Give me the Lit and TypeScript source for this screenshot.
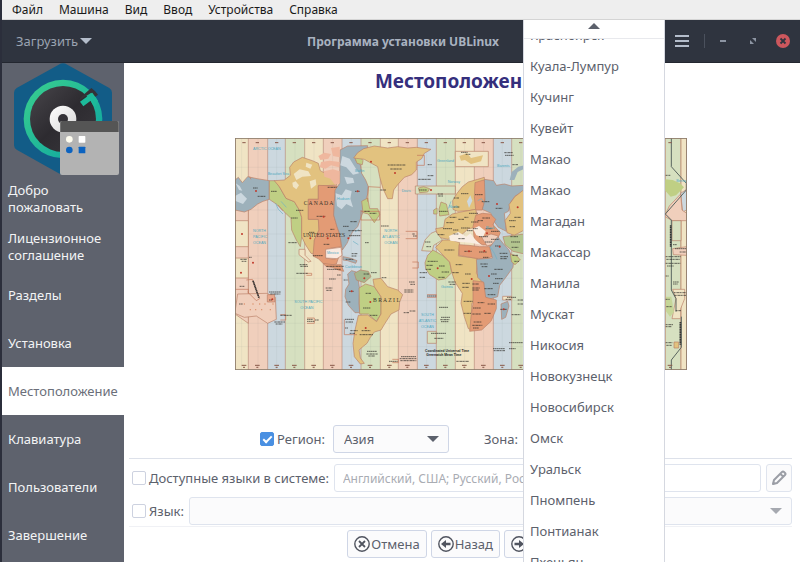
import { LitElement, html, css, svg } from "lit";
import { customElement, state } from "lit/decorators.js";

const SAND = "#e2c27f";
const ORANGE = "#e39b75";
const BLUE = "#9db1bb";
const GREEN = "#bfcf84";
const CREAM = "#f0e4c4";
const PINK = "#f0cfbc";
const PALE_BLUE = "#ccd8df";
const PALE_GREEN = "#d6e0c0";

// Left edge and colour of every hour band.
const bands: [number, string][] = [
  [12, CREAM], [52, PINK], [110, PALE_BLUE], [163, PALE_GREEN], [221, CREAM], [277, PINK],
  [333, PALE_BLUE], [390, PALE_GREEN], [448, CREAM], [502, PINK], [559, PALE_BLUE], [616, PALE_GREEN],
  [673, CREAM], [730, PINK], [787, PALE_BLUE], [842, PALE_GREEN], [898, CREAM], [954, PINK],
  [1010, PALE_BLUE], [1066, PALE_GREEN], [1122, CREAM], [1178, PINK], [1234, PALE_BLUE], [1290, PALE_GREEN],
  [1350, CREAM],
];

const america: [string, string][] = [
  [PINK, "12,240 52,232 52,580 12,552"],
  [CREAM, "12,272 52,272 52,350 12,350"],
  [CREAM, "12,384 52,384 52,444 12,444"],
  [BLUE, "12,150 22,142 34,158 50,140 78,146 115,152 115,208 96,214 80,222 60,238 40,246 12,240"],
  [GREEN, "115,152 132,152 145,170 165,205 190,215 205,240 212,262 212,320 208,350 196,330 182,300 180,265 158,244 140,225 115,208"],
  [SAND, "130,152 160,150 178,136 176,112 188,96 214,82 244,92 262,100 268,122 300,140 318,165 262,168 262,208 232,208 232,268 262,268 264,300 250,330 250,372 240,370 224,345 212,320 212,262 205,240 190,215 165,205 145,170"],
  [ORANGE, "262,166 318,168 322,186 308,215 308,255 318,290 326,312 331,350 300,354 284,362 284,384 308,388 322,384 316,402 295,406 276,400 262,386 246,378 250,330 264,300 262,268 232,268 232,208 262,208"],
  ["#faeae0", "284,358 330,352 333,376 318,386 284,384"],
  [BLUE, "327,60 350,48 410,47 408,64 384,74 374,92 388,104 392,130 404,150 412,170 410,192 404,215 398,240 380,290 365,305 356,322 348,340 334,360 326,312 318,290 308,255 312,180 326,160"],
  [GREEN, "392,214 410,204 416,236 440,236 446,254 430,278 412,252 396,248"],
  [GREEN, "372,84 386,78 396,92 394,104 378,100"],
  [BLUE, "336,380 356,384 378,392 374,400 350,392 336,390"],
  [ORANGE, "276,400 306,404 330,404 338,424 322,420 304,412 286,410"],
  [CREAM, "204,358 222,358 222,376 240,394 232,396 204,374"],
  [BLUE, "350,432 362,422 376,426 382,452 386,478 384,520 386,548 372,548 352,526 342,500 344,478 354,462"],
  ["#a5b78c", "370,430 388,420 412,424 420,440 400,458 376,450"],
  [GREEN, "384,474 404,462 430,470 450,500 450,552 436,574 412,552 386,552"],
  [SAND, "426,448 450,445 470,470 500,480 515,494 506,516 504,540 480,552 462,580 450,600 430,606 418,622 408,640 398,648 384,660 388,684 400,700 388,702 370,680 366,640 372,600 382,556 410,555 437,575 450,552 450,500 430,470"],
  [PINK, "12,545 20,492 108,490 133,502 136,568 110,580 76,558 40,562 12,550"],
  ["#e8a88c", "109,494 131,494 131,516 109,516"],
  [SAND, "368,84 380,68 398,56 430,48 470,54 500,50 530,54 556,52 600,58 580,70 572,86 556,96 556,120 542,134 520,142 500,164 488,180 484,206 470,206 456,176 446,140 440,110 418,98 400,88"],
];

// Inland water, ice and arctic islands, drawn without a border.
const americaDetail: [string, string][] = [
  [PALE_BLUE, "12,198 30,188 48,206 36,222 12,212"],
  [PALE_BLUE, "14,160 26,168 34,182 24,180"],
  [CREAM, "188,132 206,118 232,124 240,138 214,140 196,150"],
  [CREAM, "236,154 254,148 256,164 240,176"],
  [CREAM, "226,98 244,104 238,116 224,110"],
  [CREAM, "184,158 194,154 204,166 196,178 186,170"],
  ["#efb79e", "262,78 280,68 300,72 292,86 268,90"],
  ["#efb79e", "300,54 326,50 326,82 306,78"],
  ["#efb79e", "270,96 296,92 326,96 324,112 300,106 284,116 266,112"],
  ["#efb79e", "278,124 306,118 326,124 326,160 312,164 298,146 280,140"],
  [PALE_BLUE, "314,190 332,196 344,178 362,184 358,206 366,232 346,222 332,238 318,228"],
  [PALE_BLUE, "334,78 356,86 372,112 384,130 366,134 346,112 328,106"],
  [PALE_BLUE, "340,140 366,144 370,158 348,162"],
];

const oldWorld: [string, string][] = [
  [CREAM, "223,64 322,64 322,110 223,110"],
  [PALE_GREEN, "103,168 223,168 223,192 103,192"],
  [GREEN, "112,174 128,170 146,176 140,186 116,188"],
  [SAND, "215,212 228,190 244,170 262,156 290,148 310,142 312,210 284,238 264,242 230,244 216,238"],
  [ORANGE, "282,158 308,150 320,166 312,206 304,240 284,240 280,200"],
  [BLUE, "310,148 338,152 346,166 370,162 392,168 430,166 430,184 402,198 390,216 382,244 370,250 376,304 352,292 336,270 330,250 304,238 312,210"],
  [GREEN, "174,238 180,216 196,222 204,254 176,258"],
  [GREEN, "158,240 168,234 168,252 158,252"],
  [SAND, "164,296 188,292 192,268 214,252 240,246 284,238 290,262 286,292 262,296 240,316 216,312 202,328 172,322"],
  [ORANGE, "284,256 304,250 328,252 344,268 336,284 358,308 350,326 330,346 304,344 280,330 276,290"],
  [PINK, "302,322 330,312 352,318 346,340 318,348"],
  [PALE_GREEN, "122,362 132,330 150,310 164,304 184,330 158,346 154,364"],
  [GREEN, "132,398 140,376 156,360 184,376 206,396 212,428 194,446 172,450 146,434 134,416"],
  [SAND, "164,352 186,330 212,330 236,338 232,378 290,385 286,430 306,456 300,512 272,520 272,600 262,596 250,560 240,520 244,490 222,456 214,432 206,396"],
  [ORANGE, "234,344 264,346 296,350 336,350 340,376 318,386 285,385 234,376"],
  [BLUE, "286,388 334,384 326,352 350,320 366,340 384,360 398,392 396,412 376,440 356,466 350,500 324,508 308,496 308,460 290,442"],
  [GREEN, "388,372 408,378 418,390 402,404 392,396"],
  [ORANGE, "276,452 308,456 314,502 346,510 346,536 330,574 302,600 266,604 270,560 276,520"],
  [BLUE, "360,522 380,514 384,528 374,562 362,568"],
  [SAND, "372,272 388,250 384,224 402,200 430,178 430,300 400,316 378,308"],
  ["#b3c58f", "366,320 430,312 430,372 396,364 372,344"],
  [PALE_GREEN, "139,604 166,604 166,640 139,640"],
  [CREAM, "365,499 392,499 392,510 365,510"],
];

const oldWorldDetail: [string, string][] = [
  [SAND, "235,78 258,70 270,84 306,76 300,94 270,102 252,90 240,92"],
  [PALE_BLUE, "258,214 268,196 274,212 264,234"],
  [BLUE, "386,150 392,126 412,110 430,106 430,116 410,126 400,150"],
  ["#f9ede2", "204,318 232,306 256,320 268,310 284,330 300,344 268,338 240,336 208,332"],
  ["#f9ede2", "276,296 294,288 314,304 306,322 286,316"],
];

const pacific: [string, string][] = [
  [PALE_GREEN, "28,24 75,24 75,720 28,720"],
  [CREAM, "75,24 92,24 92,720 75,720"],
  [PALE_BLUE, "74,190 92,178 92,240 80,246"],
  [PINK, "28,254 40,228 74,192 78,240 92,250 92,272 48,272 28,260"],
  [PALE_GREEN, "48,272 75,272 75,332 48,332"],
  [PINK, "50,356 92,350 92,376 52,374"],
  [CREAM, "50,478 86,478 86,506 74,536 74,566 48,566 60,506"],
  [SAND, "54,636 68,636 68,654 54,654"],
];

const pacificDetail: [string, string][] = [
  [GREEN, "28,148 50,150 72,160 84,172 60,196 44,200 28,182"],
  ["#c6d698", "30,500 46,500 54,546 42,560 30,544"],
];

// Tiny place captions: x, y, length.
const captions: [number, number, number][] = [
  [66, 174, 14], [80, 199, 24], [120, 184, 18], [195, 241, 22], [180, 264, 20], [257, 259, 26], [290, 172, 28],
  [372, 184, 14], [358, 275, 20], [336, 289, 18], [352, 302, 40], [354, 317, 34], [172, 338, 26], [234, 307, 16],
  [278, 343, 18], [298, 298, 12], [246, 377, 30], [362, 371, 18], [362, 378, 14], [344, 388, 24], [206, 404, 24],
  [208, 409, 24], [196, 430, 34], [286, 409, 52], [288, 418, 42], [294, 447, 20], [284, 474, 20], [286, 481, 16],
  [318, 435, 12], [338, 450, 12], [28, 388, 20], [32, 394, 14], [54, 382, 8], [26, 469, 14], [24, 522, 12],
  [114, 486, 36], [118, 492, 30], [114, 510, 10], [148, 556, 34], [228, 568, 18], [228, 574, 22], [252, 570, 12],
  [130, 576, 32], [134, 582, 20], [354, 484, 14], [344, 516, 14], [396, 534, 22], [416, 556, 24], [404, 490, 16],
  [392, 602, 26], [386, 614, 40], [342, 568, 28], [344, 576, 22], [358, 602, 22], [356, 610, 16], [342, 594, 10],
  [408, 664, 30], [406, 672, 34], [412, 678, 20], [402, 338, 12], [398, 432, 16], [420, 428, 18], [416, 250, 20],
  [450, 288, 24], [400, 244, 16], [470, 105, 54], [478, 117, 34], [590, 104, 12], [590, 137, 18], [562, 148, 38],
  [448, 180, 18], [620, 192, 16], [564, 180, 24], [622, 198, 14], [690, 67, 20], [704, 73, 14], [820, 68, 26],
  [822, 76, 26], [844, 104, 18], [452, 443, 14], [534, 456, 18], [538, 463, 14], [520, 480, 28], [520, 486, 28],
  [518, 548, 16], [536, 543, 18], [544, 312, 8], [546, 318, 12], [566, 428, 22], [566, 442, 16], [588, 498, 28],
  [624, 532, 28], [630, 562, 28], [628, 569, 28], [630, 575, 22], [600, 610, 46], [610, 625, 28], [510, 680, 46],
  [506, 686, 50], [508, 692, 48], [474, 694, 26], [676, 694, 38], [786, 656, 36], [788, 662, 34], [834, 656, 20],
  [834, 638, 44], [860, 510, 24], [860, 522, 20], [828, 502, 28], [842, 554, 26],
  [668, 204, 16], [690, 191, 22], [732, 194, 24], [668, 231, 18], [794, 235, 20], [752, 215, 24], [714, 250, 28],
  [624, 244, 26], [656, 262, 20], [682, 268, 18], [646, 278, 22], [700, 262, 12], [720, 276, 22], [740, 272, 16],
  [754, 264, 24], [636, 296, 28], [666, 300, 16], [690, 294, 26], [708, 302, 18], [726, 296, 14], [620, 314, 20],
  [668, 312, 14], [682, 326, 20], [764, 296, 20], [780, 304, 26], [744, 320, 28], [762, 336, 22], [780, 328, 24],
  [640, 360, 30], [700, 364, 22], [744, 366, 24], [756, 382, 16], [792, 348, 16], [806, 370, 24], [808, 380, 24],
  [808, 386, 20], [590, 394, 30], [586, 406, 20], [584, 418, 16], [624, 408, 18], [632, 426, 22], [674, 404, 20],
  [748, 402, 22], [752, 410, 18], [790, 418, 26], [780, 432, 18], [702, 432, 18], [664, 428, 20], [622, 442, 20],
  [652, 456, 22], [656, 463, 18], [694, 460, 22], [694, 472, 20], [724, 462, 20], [724, 480, 20], [724, 474, 22],
  [760, 476, 26], [792, 446, 24], [786, 460, 18], [770, 494, 24], [698, 514, 28], [740, 518, 20], [770, 522, 22],
  [698, 550, 22], [726, 534, 24], [724, 552, 26], [760, 550, 20], [728, 576, 24], [724, 586, 30], [726, 594, 18],
  [808, 538, 20], [824, 508, 16], [586, 350, 14], [582, 336, 16], [834, 272, 20], [836, 290, 16], [838, 320, 24],
  [840, 336, 28], [842, 352, 20], [844, 376, 18], [850, 394, 14], [850, 262, 20],
  [1304, 136, 14], [1304, 380, 46], [1306, 388, 40], [1304, 400, 44], [1308, 408, 20], [1326, 344, 12], [1332, 356, 34],
  [1346, 366, 20], [1304, 438, 10], [1326, 456, 18], [1326, 462, 14], [1328, 488, 38], [1330, 496, 36], [1304, 508, 12],
  [1306, 530, 16], [1334, 542, 16], [1304, 584, 22], [1304, 590, 18], [1304, 638, 20], [1306, 646, 16],
];

// Capital markers.
const dots: [number, number][] = [
  [75, 183], [33, 312], [238, 325], [290, 325], [352, 325], [278, 260], [380, 184], [400, 445], [362, 484], [418, 516],
  [404, 594], [30, 428], [66, 398], [124, 508], [492, 129], [600, 180], [798, 222], [620, 415], [714, 364], [760, 363],
  [722, 447], [774, 438], [818, 538], [806, 350], [420, 95], [768, 310], [860, 232],
];

// Blue sea names: x, y, text.
const seas: [number, number, string][] = [
  [66, 61, "ARCTIC  OCEAN"], [110, 136, "Beaufort Sea"], [66, 305, "NORTH"], [66, 324, "PACIFIC"], [66, 342, "OCEAN"],
  [190, 519, "SOUTH PACIFIC"], [208, 537, "OCEAN"], [460, 305, "NORTH"], [454, 324, "ATLANTIC"], [460, 342, "OCEAN"],
  [570, 558, "SOUTH"], [563, 577, "ATLANTIC"], [570, 595, "OCEAN"], [342, 415, "Caribbean"], [618, 97, "Greenland"],
  [650, 160, "Norway"], [654, 233, "North"], [512, 186, "Davis"], [798, 112, "Barents"],
  [372, 126, "Baffin"], [318, 210, "Hudson"], [764, 297, "Black"],
  [630, 474, "Guinea"], [288, 372, "Mexico"], [1336, 156, "Bering"],
];

const land = (shapes: [string, string][]) =>
  shapes.map(([fill, points]) => svg`<polygon fill=${fill} points=${points}></polygon>`);

const downArrow = html`<svg class="arrow" viewBox="0 0 12 6" aria-hidden="true"><path d="M0 0h12L6 6z" /></svg>`;

@customElement("timezone-map")
export class TimezoneMap extends LitElement {
  static styles = css`
    :host { display: block; width: 452px; max-width: 100%; }
    .map { display: block; width: 100%; height: auto; font-family: "Liberation Serif", serif; }
    .outline { stroke: #b98068; stroke-width: 2; stroke-linejoin: round; }
    .sea { fill: #4fa9c0; font: 11px "Liberation Sans", sans-serif; }
    .country { fill: #3c352c; font-size: 17px; }
    .note { fill: #222; font: bold 10px "Liberation Sans", sans-serif; }
  `;

  render() {
    return html`
      <svg class="map" viewBox="12 24 1356 696" role="img" aria-label="Карта часовых поясов">
        ${bands.map(([x, fill]) => svg`<rect x=${x} y="24" width="60" height="696" fill=${fill}></rect>`)}
        ${bands.map(([x]) => svg`<path d=${`M${x} 24V720`} stroke="#b98c7c" stroke-width="2"></path>`)}
        <path d="M32 24V720M81 24V720M137 24V720M192 24V720M249 24V720M305 24V720M361 24V720M419 24V720M475 24V720M530 24V720M587 24V720M644 24V720M701 24V720M758 24V720M814 24V720M870 24V720M12 112H1368M12 181H1368M12 240H1368M12 312H1368M12 378H1368M12 445H1368M12 512H1368M12 580H1368M12 650H1368" stroke="#77827d" stroke-opacity=".22" stroke-width="1" />
        <g class="outline">${land(america)}</g>
        <g>${land(americaDetail)}</g>
        <g class="outline" transform="translate(450 0)">${land(oldWorld)}</g>
        <g transform="translate(450 0)">${land(oldWorldDetail)}</g>
        <g class="outline" transform="translate(1275 0)">${land(pacific)}</g>
        <g transform="translate(1275 0)">${land(pacificDetail)}</g>
        <g fill="none" stroke="#c27659" stroke-width="2">
          <path d="M390 240V270H446V244H390M340 568V614H378M148 554H164V570H148M226 430H242V436H226M228 564H250V580H228M524 304H558V326H524M558 76H580V106H558M544 396H562V414H544M588 494H616V502H588M484 688H502V698H484" />
          <path d="M410 215L412 170L448 172M140 225L156 242M60 148L56 140" />
          <path d="M12 478H52V490M46 450L64 448L86 506L76 512L50 486" />
        </g>
        <path d="M1321 24V110L1366 160V180L1303 252L1321 270V480L1335 506V545M1351 560V652L1321 690V720" fill="none" stroke="#5a655f" stroke-width="3" />
        <path d="M66 452L84 504M1319 286V350M1348 576V644" stroke="#333" stroke-width="5" stroke-dasharray="4 1" />
        <path d="M134 220L142 238L156 252M150 214L166 232M366 334L382 344M372 306L384 298M776 348L790 370L798 388M660 214L652 236M740 212L752 206L760 220" fill="none" stroke="#6fb1c4" stroke-width="2" />
        <g stroke="#2e2c28" stroke-width="3" stroke-opacity=".7">
          ${captions.map(([x, y, w]) => svg`<path d=${`M${x} ${y}h${w}`} stroke-dasharray="5 1 3 1 7 1"></path>`)}
        </g>
        <g fill="#c0392b">${dots.map(([x, y]) => svg`<circle cx=${x} cy=${y} r="3"></circle>`)}</g>
        <g fill="#d98a63">
          ${[40, 58, 66, 74, 86, 92, 102, 118, 126].map((x, i) => svg`<circle cx=${x} cy=${522 + ((i * 17) % 34)} r="2"></circle>`)}
        </g>
        <g stroke="#8a5a4a" stroke-width="3">
          ${bands.map(([x]) => svg`<path d=${`M${x + 22} 38h10M${x + 20} 706h14M${x + 24} 712h6`}></path>`)}
        </g>
        ${seas.map(([x, y, name]) => svg`<text class="sea" x=${x} y=${y}>${name}</text>`)}
        <text class="country" x="218" y="226">C A N A D A</text>
        <text class="country" x="216" y="322">UNITED STATES</text>
        <text class="country" x="426" y="517">B R A Z I L</text>
        <text class="note" x="582" y="666">Coordinated Universal Time</text>
        <text class="note" x="586" y="677">Greenwich Mean Time</text>
        <rect x="13" y="25" width="1354" height="694" fill="none" stroke="#8d7d6c" stroke-width="3" />
      </svg>
    `;
  }
}

@customElement("app-root")
export class AppRoot extends LitElement {
  @state() private step = "Местоположение";

  static styles = css`
    :host {
      display: flex; flex-direction: column; position: relative; box-sizing: border-box;
      min-height: 100vh; overflow: hidden; background: #fff; border-left: 2px solid #2b2e3b;
      color: #5c616c; font: 13px/17px "Noto Sans", "Open Sans", sans-serif;
    }
    button, select, input { font: inherit; color: inherit; margin: 0; box-sizing: border-box; }
    svg { display: block; flex: none; }
    .menubar { display: flex; height: 20px; gap: 16px; padding: 0 10px; box-sizing: border-box; background: #eee; border-bottom: 1px solid #d4d4d4; }
    .menubar button { padding: 0; border: 0; background: none; color: #1a1a1a; font-size: 12px; line-height: 18px; }
    .titlebar { display: grid; grid-template-columns: 1fr auto 1fr; align-items: center; height: 43px; box-sizing: border-box; padding: 0 10px 0 14px; background: #2f343f; border-bottom: 1px solid #232730; color: #afb8c6; }
    .titlebar button { display: flex; align-items: center; justify-content: center; padding: 0; border: 0; background: none; }
    .titlebar .load { justify-self: start; gap: 2px; color: #9aa3b1; }
    .load .arrow { fill: #b4bdcb; }
    .title { margin: 0; font-size: 12px; line-height: 17px; font-weight: 700; color: #a9b2c0; }
    .controls { display: flex; align-items: center; justify-self: end; }
    .controls .divider { width: 1px; height: 14px; margin: 0 11px 0 15px; background: #4b515d; }
    .controls button { width: 14px; height: 14px; }
    .controls .win { margin-right: 16px; }
    .arrow { width: 12px; height: 6px; fill: #5c616c; }
    .body { display: flex; flex: 1; }
    .sidebar { flex: none; width: 122px; background: #5e626d; }
    .steps { list-style: none; margin: 0; padding: 0; }
    .step { display: flex; align-items: center; width: 100%; height: 48px; padding: 0 6px; border: 0; background: none; color: #f3f4f5; text-align: left; }
    .step.current { background: #fff; color: #6b6f7a; }
    .content { display: flex; flex: 1; flex-direction: column; min-width: 0; padding: 0 8px 4px 5px; }
    .heading { margin: 0; padding: 4px 0; font-size: 19px; line-height: 28px; font-weight: 700; text-align: center; color: #352f7d; }
    .map-area { display: flex; flex: 1; justify-content: center; align-items: flex-start; padding: 39px 0 16px; }
    .row { display: flex; align-items: center; }
    .place { justify-content: center; padding-bottom: 5px; }
    .settings { display: flex; flex-direction: column; gap: 5px; padding: 5px 0 1px 3px; border-top: 1px solid #dde1ea; border-bottom: 1px solid #f0f1f5; }
    .settings .row { gap: 5px; }
    .check { display: flex; align-items: center; gap: 3px; white-space: nowrap; }
    .check input { display: grid; place-items: center; appearance: none; width: 14px; height: 14px; border: 1px solid #cdd2e0; border-radius: 2px; background: #fff; }
    .check input:checked { border-color: #4a90e2; background: #4a90e2; }
    .check input:checked::after { content: ""; width: 7px; height: 3px; border: solid #fff; border-width: 0 0 2px 2px; transform: translateY(-1px) rotate(-45deg); }
    .combo { display: grid; align-items: center; height: 28px; }
    .combo select, .combo .arrow { grid-area: 1 / 1; }
    .combo select { appearance: none; width: 100%; height: 28px; padding: 0 10px; border: 1px solid #cfd6e6; border-radius: 3px; background: #fbfbfc; }
    .combo .arrow { justify-self: end; margin-right: 10px; pointer-events: none; }
    .combo.region { width: 116px; margin-left: 8px; }
    .combo.zone { width: 138px; margin-left: 5px; }
    .combo.wide { flex: 1; }
    .combo.wide select { border-color: #dfe4ee; }
    .combo.wide .arrow { fill: #a6a9b0; }
    .zone-label { margin-left: 35px; }
    .languages { flex: 1; min-width: 0; height: 28px; padding: 0 8px; border: 1px solid #dfe4ee; border-radius: 3px; background: #fff; font-size: 12px; }
    .languages::placeholder { color: #a9acb3; opacity: 1; }
    .edit { display: grid; place-items: center; width: 26px; height: 28px; padding: 0; border: 1px solid #dfe4ee; border-radius: 3px; background: #fbfbfc; }
    .actions { display: flex; justify-content: center; gap: 4px; padding-top: 3px; }
    .action { display: flex; align-items: center; height: 28px; gap: 1px; padding: 0 6px; border: 1px solid #cfd6e6; border-radius: 3px; background: #fbfbfc; }
    .popup { position: absolute; top: 20px; bottom: 0; left: calc(50% + 122px); width: 142px; box-sizing: border-box; overflow: hidden; background: #fff; border: solid #d5d8e0; border-width: 0 1px; }
    .scroll-up { position: absolute; top: 0; left: 0; right: 0; display: grid; justify-content: center; align-content: start; height: 19px; padding: 3px 0 0; border: 0; border-bottom: 1px solid #e8e9ed; background: #fff; }
    .options { list-style: none; margin: 0; padding: 0; }
    .option { padding: 7px 6px; }
  `;

  private steps = ["Добро пожаловать", "Лицензионное соглашение", "Разделы", "Установка", "Местоположение", "Клавиатура", "Пользователи", "Завершение"];

  private cities = ["Красноярск", "Куала-Лумпур", "Кучинг", "Кувейт", "Макао", "Макао", "Магадан", "Макассар", "Манила", "Мускат", "Никосия", "Новокузнецк", "Новосибирск", "Омск", "Уральск", "Пномпень", "Понтианак", "Пхеньян"];

  private logo() {
    return html`
      <svg width="122" height="112" viewBox="6 9 366 336" role="img" aria-label="UBLinux">
        <defs>
          <linearGradient id="ring" x1="0" y1="0" x2="1" y2="1"><stop offset="0" stop-color="#3bd08d" /><stop offset="1" stop-color="#0aa3a3" /></linearGradient>
          <linearGradient id="disc" x1="0" y1="0" x2="1" y2="1"><stop offset="0" stop-color="#48464b" /><stop offset=".5" stop-color="#2d2b30" /><stop offset="1" stop-color="#3b393e" /></linearGradient>
          <linearGradient id="hub" x1="0" y1="0" x2="1" y2="1"><stop offset="0" stop-color="#fff" /><stop offset="1" stop-color="#d5d5d5" /></linearGradient>
        </defs>
        <path d="M176 14Q189 6 202 14L328 84Q336 89 336 98V256Q336 264 328 269L202 340Q189 348 176 340L50 269Q42 264 42 256V98Q42 89 50 84Z" fill="#125c87" />
        <circle cx="189" cy="177" r="118" fill="url(#ring)" />
        <circle cx="189" cy="177" r="99" fill="url(#disc)" />
        <path d="M236 122L246 108L274 84Q288 94 294 104L284 112L274 98Z" fill="#343237" />
        <path d="M240 125L277 98L294 122L284 144L272 122L250 139Z" fill="#1dbb9b" />
        <circle cx="189" cy="177" r="40" fill="url(#hub)" />
        <circle cx="189" cy="177" r="15" fill="#343237" />
        <rect x="180" y="183" width="177" height="162" rx="6" fill="#b3b3b3" />
        <path d="M181 216V189Q181 183 187 183H350Q356 183 356 189V216Z" fill="#555" />
        <circle cx="208" cy="238" r="10" fill="#fffdf0" />
        <rect x="236" y="228" width="20" height="20" rx="2" fill="#fff" />
        <circle cx="208" cy="270" r="10" fill="#0c63c0" />
        <rect x="236" y="260" width="20" height="20" rx="2" fill="#0c63c0" />
      </svg>
    `;
  }

  private ringIcon(glyph: unknown) {
    return html`<svg width="16" height="16" viewBox="0 0 16 16" fill="none" stroke="#50545f" aria-hidden="true">
      <circle cx="8" cy="8" r="7.2" stroke-width="1.4" />${glyph}
    </svg>`;
  }

  render() {
    return html`
      <nav class="menubar" aria-label="Меню">
        ${["Файл", "Машина", "Вид", "Ввод", "Устройства", "Справка"].map((m) => html`<button type="button">${m}</button>`)}
      </nav>
      <header class="titlebar">
        <button class="load" type="button">Загрузить ${downArrow}</button>
        <h1 class="title">Программа установки UBLinux</h1>
        <div class="controls">
          <button type="button" aria-label="Меню приложения">
            <svg width="14" height="12" viewBox="0 0 14 12"><path d="M0 0h14v2H0zM0 5h14v2H0zM0 10h14v2H0z" fill="#b4bdcb" /></svg>
          </button>
          <span class="divider"></span>
          <button class="win" type="button" aria-label="Свернуть">
            <svg width="14" height="14" viewBox="0 0 14 14"><path d="M4 6h6v2H4z" fill="#8d95a3" /></svg>
          </button>
          <button class="win" type="button" aria-label="Развернуть">
            <svg width="14" height="14" viewBox="0 0 14 14"><path d="M6 4h4v4zM4 6v4h4z" fill="#8d95a3" /></svg>
          </button>
          <button type="button" aria-label="Закрыть">
            <svg width="14" height="14" viewBox="0 0 14 14"><circle cx="7" cy="7" r="7" fill="#cc575d" /><path d="M4.5 4.5l5 5M9.5 4.5l-5 5" stroke="#2f343f" stroke-width="1.8" /></svg>
          </button>
        </div>
      </header>
      <div class="body">
        <aside class="sidebar">
          ${this.logo()}
          <ul class="steps">
            ${this.steps.map((s) => html`<li>
              <button type="button" class=${s === this.step ? "step current" : "step"} @click=${() => (this.step = s)}>${s}</button>
            </li>`)}
          </ul>
        </aside>
        <main class="content">
          <h2 class="heading">Местоположение</h2>
          <div class="map-area"><timezone-map></timezone-map></div>
          <div class="row place">
            <label class="check"><input type="checkbox" checked />Регион:</label>
            <div class="combo region">
              <select aria-label="Регион"><option>Азия</option></select>${downArrow}
            </div>
            <label class="zone-label" for="zone">Зона:</label>
            <div class="combo zone">
              <select id="zone"><option></option></select>${downArrow}
            </div>
          </div>
          <div class="settings">
            <div class="row">
              <label class="check"><input type="checkbox" />Доступные языки в системе:</label>
              <input class="languages" type="text" aria-label="Доступные языки" placeholder="Английский, США; Русский, Россия" />
              <button class="edit" type="button" aria-label="Изменить">
                <svg width="16" height="16" viewBox="0 0 16 16" fill="none" stroke="#9b9ea6" stroke-width="2" stroke-linejoin="round"><path d="M2 14l1-4 8-8q1-1 2 0l1 1q1 1 0 2l-8 8zM9.500 4l2.500 2.500" /><path d="M1.500 14.500l.5-3 2.500 2.500z" fill="#9b9ea6" stroke="none" /></svg>
              </button>
            </div>
            <div class="row">
              <label class="check"><input type="checkbox" />Язык:</label>
              <div class="combo wide">
                <select aria-label="Язык"><option></option></select>${downArrow}
              </div>
            </div>
          </div>
          <div class="actions">
            <button class="action" type="button">${this.ringIcon(svg`<path d="M5 5l6 6M11 5l-6 6" stroke-width="1.8"></path>`)}Отмена</button>
            <button class="action" type="button">${this.ringIcon(svg`<path d="M3 8l5-4v2.700h4.500v2.600H8V12z" fill="#50545f" stroke="none"></path>`)}Назад</button>
            <button class="action" type="button">${this.ringIcon(svg`<path d="M13 8L8 4v2.700H3.500v2.600H8V12z" fill="#50545f" stroke="none"></path>`)}Далее</button>
          </div>
        </main>
      </div>
      <div class="popup">
        <ul class="options" role="listbox" aria-label="Зона">
          ${this.cities.map((c) => html`<li class="option" role="option">${c}</li>`)}
        </ul>
        <button class="scroll-up" type="button" aria-label="Прокрутить вверх">
          <svg class="arrow" viewBox="0 0 12 6"><path d="M0 6h12L6 0z" /></svg>
        </button>
      </div>
    `;
  }
}
